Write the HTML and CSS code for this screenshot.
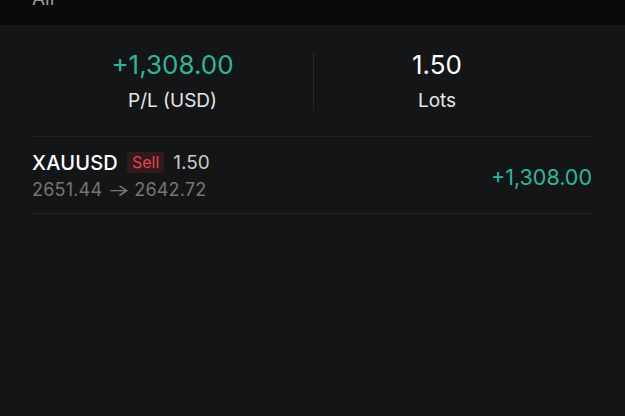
FILE: index.html
```html
<!DOCTYPE html>
<html lang="en">
<head>
	<meta charset="UTF-8">
	<title>Positions</title>
	<link rel="stylesheet" href="styles.css">
</head>
<body>
<div class="topbar">
    <span class="filter">All</span>
    <svg class="chev" width="12" height="8" viewBox="0 0 12 8"><path d="M1 1l5 5 5-5" fill="none" stroke="#9a9a9a" stroke-width="1.6"/></svg>
</div>
<div class="main">
    <div class="summary">
        <div class="cell left">
            <div class="big up">+1,308.00</div>
            <div class="label">P/L (USD)</div>
        </div>
        <div class="sep"></div>
        <div class="cell right">
            <div class="big">1.50</div>
            <div class="label">Lots</div>
        </div>
    </div>
    <div class="row">
        <div class="info">
            <div class="line1">
                <span class="sym">XAUUSD</span>
                <span class="side">Sell</span>
                <span class="lots">1.50</span>
            </div>
            <div class="line2">2651.44 <span class="arrow">→</span> 2642.72</div>
        </div>
        <div class="pl up">+1,308.00</div>
    </div>
</div>
</body>
</html>
```
FILE: styles.css
```css
* {
    margin: 0;
    padding: 0;
    box-sizing: border-box;
}

body {
    width: 625px;
    height: 416px;
    overflow: hidden;
    background: #141517;
    font-family: Inter, "Noto Sans", sans-serif;
    color: #f2f2f2;
}

.topbar {
    height: 25px;
    background: #0a0a0b;
    display: flex;
    align-items: flex-end;
    padding: 0 32px 19px;
}

.filter {
    font-size: 19px;
    line-height: 14px;
    color: #9a9a9a;
}

.chev {
    margin-left: 12px;
    margin-bottom: 5px;
}

.main {
    padding: 0 33px 0 32px;
}

.summary {
    display: flex;
    align-items: center;
    height: 112px;
    border-bottom: 1px solid #232427;
}

.cell {
    display: flex;
    flex-direction: column;
    align-items: center;
}

.left {
    width: 281px;
}

.right {
    flex: 1;
    padding-right: 32px;
}

.sep {
    width: 1px;
    height: 58px;
    background: #26272a;
}

.big {
    font-size: 26px;
    line-height: 32px;
    color: #ffffff;
}

.label {
    margin-top: 9px;
    font-size: 19px;
    line-height: 22px;
    color: #e6e6e6;
}

.up {
    color: #2fb59c;
}

.row {
    display: flex;
    align-items: center;
    justify-content: space-between;
    height: 77px;
    border-bottom: 1px solid #232427;
}

.line1 {
    display: flex;
    align-items: center;
    gap: 9px;
}

.sym {
    font-size: 20px;
    font-weight: 500;
    letter-spacing: 0.2px;
    color: #ffffff;
}

.side {
    padding: 1px 5px;
    font-size: 16px;
    line-height: 19px;
    color: #e0464c;
    background: #33191b;
    border-radius: 2px;
}

.lots {
    font-size: 19px;
    color: #c9c9c9;
}

.line2 {
    margin-top: 4px;
    font-size: 18px;
    letter-spacing: 0.2px;
    color: #767676;
}

.arrow {
    display: inline-block;
    margin: 0 3px;
    font-size: 16px;
    transform: scaleX(1.5);
}

.pl {
    margin-top: 3px;
    font-size: 21.5px;
}
```
